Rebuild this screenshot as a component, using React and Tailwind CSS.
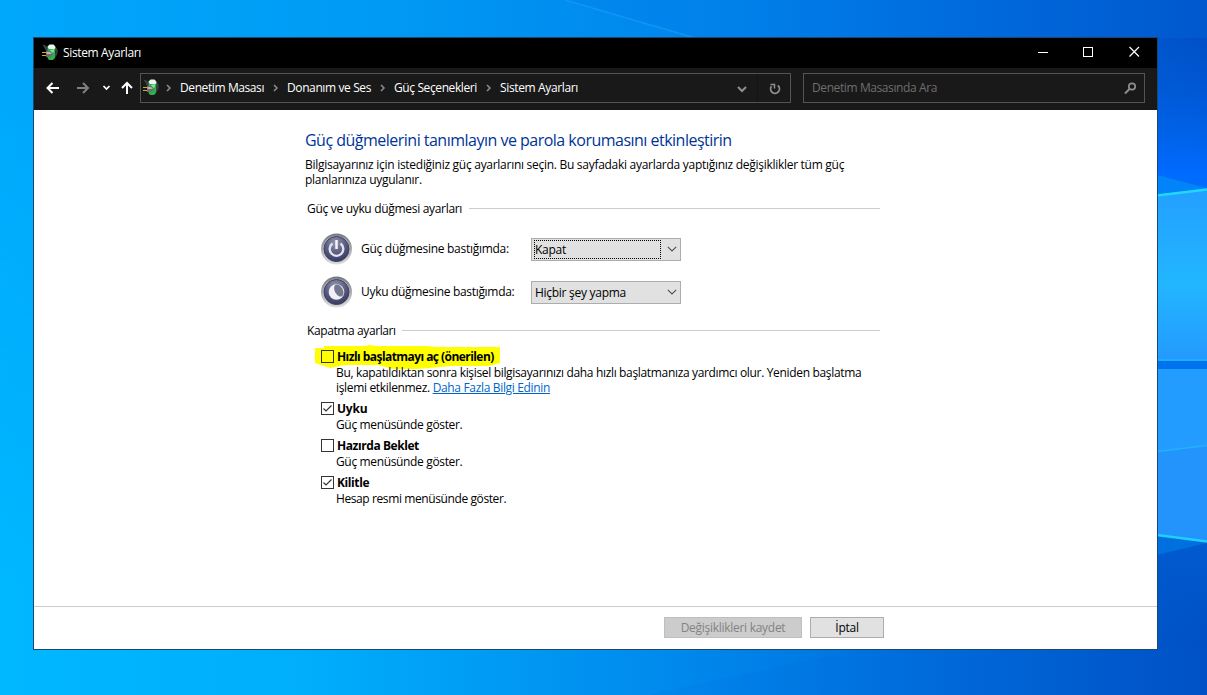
import React, { useState } from 'react';

const BREADCRUMBS = [
  { label: 'Denetim Masası', className: 'w-[85px] tracking-[-0.4px]' },
  { label: 'Donanım ve Ses', className: 'w-[85px] tracking-[-0.39px]' },
  { label: 'Güç Seçenekleri', className: 'w-[84px] tracking-[-0.39px]' },
  { label: 'Sistem Ayarları', className: 'w-[80px] tracking-[-0.36px]' }
];

function Wallpaper() {
  return (
    <svg className="absolute inset-0" width="1207" height="695" viewBox="0 0 1207 695">
      <defs>
        <linearGradient id="sky" x1="0" y1="0" x2="1" y2="0">
          <stop offset="0" stopColor="#00a8fc" />
          <stop offset="0.3" stopColor="#009bf4" />
          <stop offset="0.6" stopColor="#0084ec" />
          <stop offset="0.8" stopColor="#0068dc" />
          <stop offset="1" stopColor="#0050c8" />
        </linearGradient>
        <linearGradient id="floor" x1="0" y1="0" x2="1" y2="0">
          <stop offset="0" stopColor="#00b8ff" />
          <stop offset="0.25" stopColor="#00aefc" />
          <stop offset="0.6" stopColor="#0084ea" />
          <stop offset="0.8" stopColor="#0068d8" />
          <stop offset="1" stopColor="#0050c4" />
        </linearGradient>
        <linearGradient id="fade" x1="0" y1="0" x2="0" y2="1">
          <stop offset="0.1" stopColor="black" />
          <stop offset="0.85" stopColor="white" />
        </linearGradient>
        <mask id="lower">
          <rect width="1207" height="695" fill="url(#fade)" />
        </mask>
        <linearGradient id="edge" x1="0" y1="0" x2="0" y2="1">
          <stop offset="0" stopColor="#0060dc" stopOpacity="0" />
          <stop offset="0.22" stopColor="#006bff" />
          <stop offset="0.5" stopColor="#006cf0" />
          <stop offset="0.85" stopColor="#0059ce" />
          <stop offset="1" stopColor="#0056c8" stopOpacity="0" />
        </linearGradient>
        <linearGradient id="pane" x1="0" y1="0" x2="0" y2="1">
          <stop offset="0" stopColor="#249fff" />
          <stop offset="0.55" stopColor="#22b6ff" />
          <stop offset="1" stopColor="#2499ff" />
        </linearGradient>
      </defs>
      <rect width="1207" height="695" fill="url(#sky)" />
      <rect width="1207" height="695" fill="url(#floor)" mask="url(#lower)" />
      <path d="M565 0L700 38H1207V0Z" fill="#0078e8" opacity="0.2" />
      <path d="M565 0L695 38" stroke="#38a8ff" strokeWidth="1.5" opacity="0.35" />
      <path d="M650 695L860 649H1207V695Z" fill="#0060d8" opacity="0.1" />
      <rect x="1157" y="38" width="50" height="612" fill="url(#edge)" />
      <path d="M1157 175L1207 188V190L1157 196Z" fill="#0084f8" />
      <path d="M1157 195L1207 189V361H1157Z" fill="url(#pane)" />
      <path d="M1157 195.500L1207 189.500" stroke="#20d8ff" strokeWidth="2.500" />
      <rect x="1157" y="359" width="50" height="2" fill="#18b0ff" />
      <rect x="1157" y="361" width="50" height="8" fill="#0072ee" />
      <path d="M1157 369H1207V541L1157 535Z" fill="#229cff" />
      <path d="M1157 451L1207 445V541L1157 535Z" fill="#2394fc" />
      <path d="M1157 451.500L1207 445.500" stroke="#24b0ff" strokeWidth="1.500" />
      <path d="M1157 369.500H1207" stroke="#18a4ff" />
      <path d="M1157 536L1207 543L1157 555Z" fill="#0070e0" />
      <path d="M1157 535L1207 541.500" stroke="#20d0ff" strokeWidth="2.500" />
    </svg>
  );
}

function PowerOptionsIcon() {
  return (
    <svg className="mb-[2px] shrink-0" width="17" height="17" viewBox="0 0 17 17">
      <path d="M1.500 0.500L5 1.500L8 7L5 7Z" fill="#3c3f42" />
      <path d="M13 4C16.500 4 17 10 13 13" fill="none" stroke="#3a3d40" strokeWidth="2" />
      <path d="M6.500 2.500L8 1H13L14.500 3L14 14L12 16H8L6.500 14Z" fill="#2fae4c" />
      <path d="M6.500 3L8.500 0.500H12.500L14.500 3L13.500 5H8Z" fill="#eef4f4" />
      <path d="M9 6L13 5V8L11 9Z" fill="#79e48a" />
      <path d="M5 7H9L12.500 10L9 13H5Z" fill="#6b6d6f" />
      <path d="M5.500 8H9L11 10H5.500Z" fill="#b4b6b8" />
      <path d="M1 8.500H5M1 11.500H5" stroke="#e0a91c" />
    </svg>
  );
}

function RoundIcon({ children }) {
  return (
    <svg className="mt-px shrink-0" width="32" height="32" viewBox="0 0 32 32">
      <defs>
        <linearGradient id="ring" x1="0" y1="0" x2="0" y2="1">
          <stop offset="0" stopColor="#77787c" />
          <stop offset="0.5" stopColor="#a9aaae" />
          <stop offset="1" stopColor="#dedfe2" />
        </linearGradient>
        <radialGradient id="dome" cx="0.45" cy="0.25" r="0.8">
          <stop offset="0" stopColor="#9295b0" />
          <stop offset="0.5" stopColor="#5c5e82" />
          <stop offset="1" stopColor="#33345a" />
        </radialGradient>
      </defs>
      <circle cx="15.500" cy="16" r="15.500" fill="url(#ring)" />
      <circle cx="15.500" cy="16" r="13.300" fill="#bcbdc4" />
      <circle cx="15.500" cy="16" r="12.500" fill="url(#dome)" stroke="#3f4064" />
      {children}
    </svg>
  );
}

function Select({ value, focused }) {
  return (
    <div className="mt-[2px] flex h-[23px] w-[150px] items-center border border-[#adadad] bg-[#e1e1e1] p-[2px]">
      <div className={`flex h-[19px] w-[127px] shrink-0 items-center border border-dotted ${focused ? 'border-black' : 'border-transparent'}`}>
        {value}
      </div>
      <svg className="ml-[6px] shrink-0" width="10" height="6" viewBox="0 0 10 6">
        <path d="M0.800 0.800L5 5L9.200 0.800" fill="none" stroke="#505050" strokeWidth="1.100" />
      </svg>
    </div>
  );
}

function SectionTitle({ title, className }) {
  return (
    <div className="flex h-4 items-center">
      <span className={`shrink-0 whitespace-nowrap ${className}`}>{title}</span>
      <div className="h-px flex-1 bg-[#cccccc]" />
    </div>
  );
}

function Checkbox({ label, checked, onChange, className }) {
  return (
    <label className="relative flex h-[17px] items-center font-bold">
      <input type="checkbox" className="sr-only" checked={checked} onChange={onChange} />
      <svg className="mr-[3px] shrink-0" width="13" height="13" viewBox="0 0 13 13">
        <rect x="0.500" y="0.500" width="12" height="12" fill="none" stroke="#333333" />
        {checked && <path d="M2.500 6.500L5 9L10.500 3.500" fill="none" stroke="#333333" strokeWidth="1.200" />}
      </svg>
      <span className={`pb-px whitespace-nowrap ${className}`}>{label}</span>
    </label>
  );
}

function Chevron() {
  return (
    <svg className="mt-px shrink-0" width="6" height="8" viewBox="0 0 6 8">
      <path d="M1 1L4 4L1 7" fill="none" stroke="#8c8c8c" strokeWidth="1.500" />
    </svg>
  );
}

export default function App() {
  const [options, setOptions] = useState({ fast: false, sleep: true, hibernate: false, lock: true });
  const toggle = (key) => setOptions({ ...options, [key]: !options[key] });

  return (
    <div className="relative h-[695px] w-[1207px] overflow-hidden bg-[#0091f0] pt-[37px] pl-[33px] font-['Open_Sans','Noto_Sans',sans-serif] text-[12px] leading-[15px] tracking-[-0.28px] text-black">
      <Wallpaper />

      <div className="relative flex h-[613px] w-[1125px] flex-col border border-[#1b4670] bg-white">
        {/* Title bar */}
        <div className="flex h-[30px] shrink-0 items-center bg-black pl-[7px] text-white">
          <PowerOptionsIcon />
          <span className="ml-[5px] flex-1 pb-[2px] tracking-[-0.36px]">Sistem Ayarları</span>
          <svg width="110" height="12" viewBox="0 0 110 12" className="mr-[9px] mb-[2px]" fill="none" stroke="white">
            <path d="M0 6.500H10" />
            <rect x="45.500" y="1.500" width="9" height="9" />
            <path d="M91.500 1L101 10.500M101 1L91.500 10.500" strokeWidth="1.200" />
          </svg>
        </div>

        {/* Navigation bar */}
        <div className="flex h-[42px] shrink-0 items-center bg-[#191919] pb-[2px] text-white">
          <svg className="mb-[2px] shrink-0" width="106" height="20" viewBox="0 0 106 20" fill="none" stroke="white" strokeWidth="2">
            <path d="M25 11H14M18.500 6L13.500 11L18.500 16" />
            <path d="M43 11H54M49 6L54 11L49 16" stroke="#808080" />
            <path d="M69.500 9L72.500 12L75.500 9" strokeWidth="1.700" />
            <path d="M93 17V6M88 11L93 6L98 11" />
          </svg>
          <div className="flex h-[30px] w-[651px] items-center border border-[#535353] pl-[1px]">
            <PowerOptionsIcon />
            <div className="ml-[7px] flex items-center pb-px">
              {BREADCRUMBS.map((crumb) => (
                <div key={crumb.label} className="flex items-center">
                  <Chevron />
                  <span className={`mr-[8px] ml-[8px] whitespace-nowrap ${crumb.className}`}>{crumb.label}</span>
                </div>
              ))}
            </div>
            <svg className="ml-auto" width="60" height="28" viewBox="0 0 60 28" fill="none" stroke="#8f8f8f" strokeWidth="2">
              <path d="M8 13L12 17L16 13" />
              <path d="M27.500 0V28" stroke="#141414" strokeWidth="1" />
              <path d="M47.800 11.500A4.400 4.400 0 1 1 41.500 12.300" strokeWidth="1.800" />
              <path d="M40.500 10.500H44.500V14.500" strokeWidth="1.500" />
            </svg>
          </div>
          <div className="ml-[12px] flex h-[30px] w-[342px] items-center justify-between border border-[#535353] pr-[7px] pl-[8px] text-[#6e6e6e]">
            <span className="pb-px tracking-[-0.4px]">Denetim Masasında Ara</span>
            <svg width="13" height="13" viewBox="0 0 13 13" fill="none" stroke="#8f8f8f">
              <circle cx="8" cy="4.500" r="3.200" strokeWidth="1.700" />
              <path d="M5.500 7L1 11.500" strokeWidth="2" />
            </svg>
          </div>
        </div>

        {/* Page content */}
        <div className="flex-1 pt-[20px] pl-[271px]">
          <h1 className="h-5 text-[16px] leading-5 tracking-[-0.51px] whitespace-nowrap text-[#003399]">Güç düğmelerini tanımlayın ve parola korumasını etkinleştirin</h1>
          <p className="mt-[7px] whitespace-nowrap">
            <span>Bilgisayarınız için istediğiniz güç ayarlarını seçin. Bu sayfadaki ayarlarda yaptığınız değişiklikler tüm güç</span>
            <br />
            <span>planlarınıza uygulanır.</span>
          </p>

          <div className="mt-[13px] ml-[2px] w-[573px]">
            <SectionTitle title="Güç ve uyku düğmesi ayarları" className="w-[162px] tracking-[-0.31px]" />
            <div className="mt-[16px] ml-[14px] flex h-8 items-center">
              <RoundIcon>
                <path d="M11.500 10.500A6.800 6.800 0 1 0 19.500 10.500" fill="none" stroke="#e3e4ee" strokeWidth="2.300" />
                <path d="M15.500 7V16" stroke="#f4f4fa" strokeWidth="2.500" />
              </RoundIcon>
              <span className="ml-[8px] w-[170px] whitespace-nowrap">Güç düğmesine bastığımda:</span>
              <Select value="Kapat" focused />
            </div>
            <div className="mt-[11px] ml-[14px] flex h-8 items-center">
              <RoundIcon>
                <circle cx="15.500" cy="16" r="7.800" fill="#f0f1f6" />
                <ellipse cx="17.800" cy="14.500" rx="4" ry="6.500" transform="rotate(-30 17.800 14.500)" fill="#75778f" />
              </RoundIcon>
              <span className="ml-[8px] w-[170px] tracking-[-0.31px] whitespace-nowrap">Uyku düğmesine bastığımda:</span>
              <Select value="Hiçbir şey yapma" />
            </div>
          </div>

          <div className="mt-[15px] ml-[2px] w-[573px]">
            <SectionTitle title="Kapatma ayarları" className="w-[95px] tracking-[-0.4px]" />
            <div className="relative mt-[10px] ml-[14px]">
              <svg className="absolute -top-[3px] -left-[6px]" width="185" height="24" viewBox="0 0 185 24">
                <path d="M0 3H9V1H50L54 0L62 1H110L122 2H185V18L174 21H136L103 24H78L63 20H30L15 23L0 18Z" fill="#ffff00" />
              </svg>
              <Checkbox label="Hızlı başlatmayı aç (önerilen)" checked={options.fast} onChange={() => toggle('fast')} className="tracking-[-0.56px]" />
              <p className="relative ml-[15px] pb-px tracking-[-0.335px] whitespace-nowrap">
                <span>Bu, kapatıldıktan sonra kişisel bilgisayarınızı daha hızlı başlatmanıza yardımcı olur. Yeniden başlatma</span>
                <br />
                <span>işlemi etkilenmez. </span>
                <a className="text-[#0066cc] underline" href="#more">Daha Fazla Bilgi Edinin</a>
              </p>
              <div className="mt-[4px]">
                <Checkbox label="Uyku" checked={options.sleep} onChange={() => toggle('sleep')} className="tracking-[-0.2px]" />
                <p className="ml-[15px] pb-px tracking-[-0.35px]">Güç menüsünde göster.</p>
              </div>
              <div className="mt-[4px]">
                <Checkbox label="Hazırda Beklet" checked={options.hibernate} onChange={() => toggle('hibernate')} className="tracking-[-0.43px]" />
                <p className="ml-[15px] pb-px tracking-[-0.35px]">Güç menüsünde göster.</p>
              </div>
              <div className="mt-[4px]">
                <Checkbox label="Kilitle" checked={options.lock} onChange={() => toggle('lock')} className="tracking-[-0.4px]" />
                <p className="ml-[15px] pb-px tracking-[-0.4px]">Hesap resmi menüsünde göster.</p>
              </div>
            </div>
          </div>
        </div>

        {/* Footer buttons */}
        <div className="flex h-[43px] shrink-0 gap-[8px] border-t border-[#cccccc] pt-[10px] pl-[630px]">
          <button className="h-[21px] w-[138px] border border-[#bfbfbf] bg-[#cccccc] text-[#838383]" disabled>Değişiklikleri kaydet</button>
          <button className="h-[21px] w-[74px] border border-[#adadad] bg-[#e1e1e1]">İptal</button>
        </div>
      </div>
    </div>
  );
}
